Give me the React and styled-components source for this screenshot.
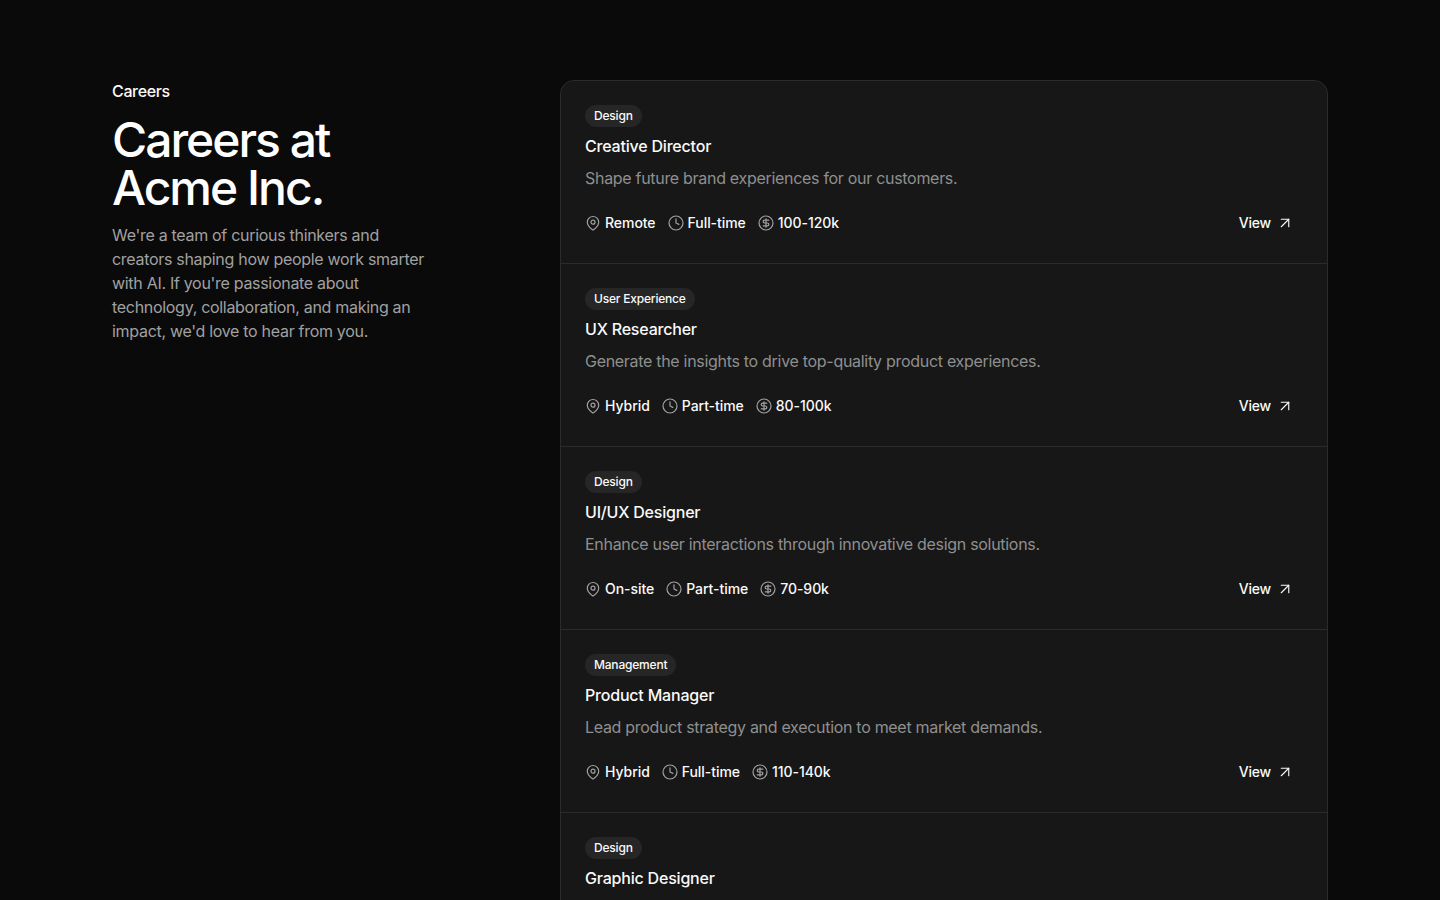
import React from "react";
import styled, { createGlobalStyle } from "styled-components";
import { ArrowUpRight } from "lucide-react";

const Global = createGlobalStyle`
  html, body { margin: 0; padding: 0; background: #0a0a0a; }
  body { font-family: Inter, "Liberation Sans", sans-serif; color: #fafafa; }
  * { box-sizing: border-box; }
`;

const Page = styled.main`
  display: grid;
  grid-template-columns: 320px 768px;
  justify-content: space-between;
  align-items: start;
  width: 1216px;
  margin: 0 auto;
  padding: 80px 0;
`;
const Intro = styled.section`
  display: flex;
  flex-direction: column;
`;
const Eyebrow = styled.span`
  font-size: 16px;
  line-height: 22px;
  font-weight: 500;
  letter-spacing: -0.35px;
  margin-bottom: 14px;
`;
const Heading = styled.h1`
  margin: 0 0 11px;
  font-size: 48px;
  line-height: 48px;
  font-weight: 500;
  letter-spacing: -2px;
  color: #fff;
`;
const Lead = styled.p`
  margin: 0;
  font-size: 16px;
  line-height: 24px;
  color: #a1a1a1;
  letter-spacing: -0.3px;
`;
const Card = styled.section`
  background: #171717;
  border: 1px solid #2b2b2b;
  border-radius: 14px;
  overflow: hidden;
`;
const Row = styled.article`
  display: flex;
  flex-direction: column;
  align-items: flex-start;
  padding: 24px;
  height: 183px;
  border-bottom: 1px solid #2b2b2b;
`;
const Badge = styled.span`
  font-size: 12px;
  line-height: 20px;
  font-weight: 500;
  height: 22px;
  padding: 1px 9px;
  border-radius: 999px;
  background: #262626;
  color: #fafafa;
  letter-spacing: -0.2px;
`;
const Title = styled.h2`
  margin: 7px 0 8px;
  font-size: 16px;
  line-height: 24px;
  font-weight: 500;
  letter-spacing: -0.2px;
`;
const Desc = styled.p`
  margin: 0 0 17px;
  font-size: 16px;
  line-height: 24px;
  color: #8f8f8f;
  letter-spacing: -0.3px;
`;
const Footer = styled.div`
  display: flex;
  align-items: center;
  justify-content: space-between;
  align-self: stretch;
  height: 32px;
`;
const Meta = styled.ul`
  display: flex;
  gap: 12px;
  margin: 0;
  padding: 0;
  list-style: none;
`;
const MetaItem = styled.li`
  display: flex;
  align-items: center;
  gap: 4px;
  font-size: 14px;
  line-height: 20px;
  font-weight: 500;
  letter-spacing: -0.05px;
`;
const MetaIcon = styled.svg.attrs({ viewBox: "0 0 16 16", "aria-hidden": true })`
  width: 16px;
  height: 16px;
  flex: none;
  fill: none;
  stroke: #a1a1a1;
  stroke-width: 1.2;
  stroke-linecap: round;
  stroke-linejoin: round;
`;
const ViewButton = styled.a`
  display: flex;
  align-items: center;
  gap: 5px;
  height: 32px;
  padding: 0 9px 0 12px;
  font-size: 14px;
  line-height: 20px;
  font-weight: 500;
  letter-spacing: -0.2px;
  color: #fafafa;
  svg { width: 18px; height: 18px; stroke-width: 1.5; }
`;

const PinIcon = () => (
  <MetaIcon>
    <path d="M13.7 7.2c0 3.4-3.9 6.6-5.2 7.5a.8.8 0 0 1-1 0C6.2 13.8 2.3 10.6 2.3 7.2a5.7 5.7 0 0 1 11.4 0" />
    <circle cx="8" cy="7.2" r="2" />
  </MetaIcon>
);
const ClockIcon = () => (
  <MetaIcon>
    <circle cx="8" cy="8" r="7" />
    <path d="M8 3.8v4.2l2.8 1.4" />
  </MetaIcon>
);
const DollarIcon = () => (
  <MetaIcon>
    <circle cx="8" cy="8" r="7" />
    <path d="M10.8 5.2H6.6a1.4 1.4 0 1 0 0 2.8h2.8a1.4 1.4 0 1 1 0 2.8H5.2" />
    <path d="M8 12.2V3.8" />
  </MetaIcon>
);

const jobs = [
  ["Design", "Creative Director", "Shape future brand experiences for our customers.", "Remote", "Full-time", "100-120k"],
  ["User Experience", "UX Researcher", "Generate the insights to drive top-quality product experiences.", "Hybrid", "Part-time", "80-100k"],
  ["Design", "UI/UX Designer", "Enhance user interactions through innovative design solutions.", "On-site", "Part-time", "70-90k"],
  ["Management", "Product Manager", "Lead product strategy and execution to meet market demands.", "Hybrid", "Full-time", "110-140k"],
  ["Design", "Graphic Designer", "Create compelling visuals that bring our brand to life.", "Remote", "Full-time", "70-90k"],
];

export default function App() {
  return (
    <>
      <Global />
      <Page>
        <Intro>
          <Eyebrow>Careers</Eyebrow>
          <Heading>Careers at Acme Inc.</Heading>
          <Lead>We're a team of curious thinkers and creators shaping how people work smarter with AI. If you're passionate about technology, collaboration, and making an impact, we'd love to hear from you.</Lead>
        </Intro>
        <Card>
          {jobs.map(([tag, title, desc, place, time, pay]) => (
            <Row key={title}>
              <Badge>{tag}</Badge>
              <Title>{title}</Title>
              <Desc>{desc}</Desc>
              <Footer>
                <Meta>
                  <MetaItem><PinIcon />{place}</MetaItem>
                  <MetaItem><ClockIcon />{time}</MetaItem>
                  <MetaItem><DollarIcon />{pay}</MetaItem>
                </Meta>
                <ViewButton>View <ArrowUpRight /></ViewButton>
              </Footer>
            </Row>
          ))}
        </Card>
      </Page>
    </>
  );
}
